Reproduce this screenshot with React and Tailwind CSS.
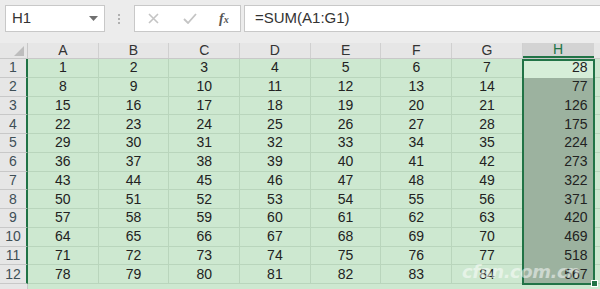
import React from "react";

const cols = ["A", "B", "C", "D", "E", "F", "G"];

export default function App() {
  const rows = Array.from({ length: 12 }, (_, r) => r);
  return (
    <div
      className="relative w-[600px] h-[289px] overflow-hidden bg-[#ececec] text-[#222]"
      style={{ fontFamily: '"Liberation Sans", Arial, sans-serif' }}
    >
      {/* toolbar */}
      <div className="flex items-center h-[43px] pt-[5px] pb-[11px] pl-[5px]">
        <div className="flex items-center justify-between w-[100px] h-[27px] bg-white border border-[#c8c8c8] pl-[6px] pr-[6px]">
          <span className="text-[15px] text-[#333]">H1</span>
          <svg width="9" height="5" viewBox="0 0 9 5"><path d="M0 0h9L4.5 5z" fill="#707070" /></svg>
        </div>
        <div className="flex flex-col gap-[2px] ml-[13px] mr-[14px]">
          <span className="w-[2px] h-[2px] bg-[#b0b0b0]" />
          <span className="w-[2px] h-[2px] bg-[#b0b0b0]" />
          <span className="w-[2px] h-[2px] bg-[#b0b0b0]" />
        </div>
        <div className="flex items-center w-[107px] h-[27px] bg-white border border-[#c8c8c8]">
          <svg className="ml-[13px]" width="11" height="11" viewBox="0 0 11 11"><path d="M1 1l9 9M10 1l-9 9" stroke="#c4c4c4" strokeWidth="1.6" /></svg>
          <svg className="ml-[24px]" width="14" height="11" viewBox="0 0 14 11"><path d="M1 6l4 4 8-9" stroke="#c4c4c4" strokeWidth="1.8" fill="none" /></svg>
          <span className="ml-[22px] text-[14px] italic font-bold text-[#555]" style={{ fontFamily: '"Liberation Serif", serif' }}>f<span className="text-[10px]">x</span></span>
        </div>
        <div className="flex items-center flex-1 h-[27px] ml-[3px] bg-white border border-[#c8c8c8] border-r-0 pl-[10px]">
          <span className="text-[15px] text-[#333]">=SUM(A1:G1)</span>
        </div>
      </div>

      {/* header row */}
      <div className="flex h-[16px] bg-[#e6e6e6] border-b border-[#c8c8c8]">
        <div className="relative w-[28px] border-r border-[#c8c8c8]">
          <svg className="absolute right-[3px] bottom-[2px]" width="10" height="10" viewBox="0 0 10 10"><path d="M10 0v10H0z" fill="#bdbdbd" /></svg>
        </div>
        {cols.map((c) => (
          <div key={c} className="flex items-center justify-center w-[70.7px] border-r border-[#d0d0d0] text-[14px] text-[#333]">
            {c}
          </div>
        ))}
        <div className="flex items-center justify-center w-[70.7px] bg-[#d3d3d3] border-b-2 border-[#217346] text-[14px] text-[#217346]">
          H
        </div>
        <div className="flex-1" />
      </div>

      {/* grid */}
      <div className="relative">
        {rows.map((r) => (
          <div key={r} className="flex h-[18.75px]">
            <div className="flex items-center justify-center w-[28px] bg-[#e6e6e6] border-r-2 border-[#217346] border-b border-b-[#c8c8c8] text-[14px] text-[#3f4f57]">
              {r + 1}
            </div>
            {cols.map((c, ci) => (
              <div key={c} className="flex items-center justify-center w-[70.7px] bg-[#cde8d0] border-r border-b border-[#b9d5bc] text-[14px] text-[#222]">
                {r * 7 + ci + 1}
              </div>
            ))}
            <div
              className={`flex items-center justify-end w-[70.7px] pr-[6px] border-b text-[14px] text-[#222] ${
                r === 0 ? "bg-[#d6eed8] border-[#d6eed8]" : "bg-[#9cb29f] border-[#9cb29f]"
              }`}
            >
              {(r * 7 + 4) * 7}
            </div>
            <div className="flex-1 bg-[#cde8d0] border-b border-[#b9d5bc]" />
          </div>
        ))}
        <div className="flex h-[10px]">
          <div className="w-[28px] bg-[#e6e6e6] border-r border-[#c8c8c8]" />
          <div className="flex-1 bg-[#cde8d0]" />
        </div>
        {/* selection border */}
        <div className="absolute left-[522px] top-0 w-[73px] h-[226px] border-2 border-[#217346]" />
        <div className="absolute left-[591px] top-[221px] w-[7px] h-[7px] bg-[#217346] border border-white" />
      </div>

      {/* watermark */}
      <div
        className="absolute left-[462px] top-[262px] text-[18px] leading-[20px] italic font-bold text-white/50 tracking-tight"
        style={{ fontFamily: '"DejaVu Sans", sans-serif' }}
      >
        cfan.com.cn
      </div>
    </div>
  );
}
